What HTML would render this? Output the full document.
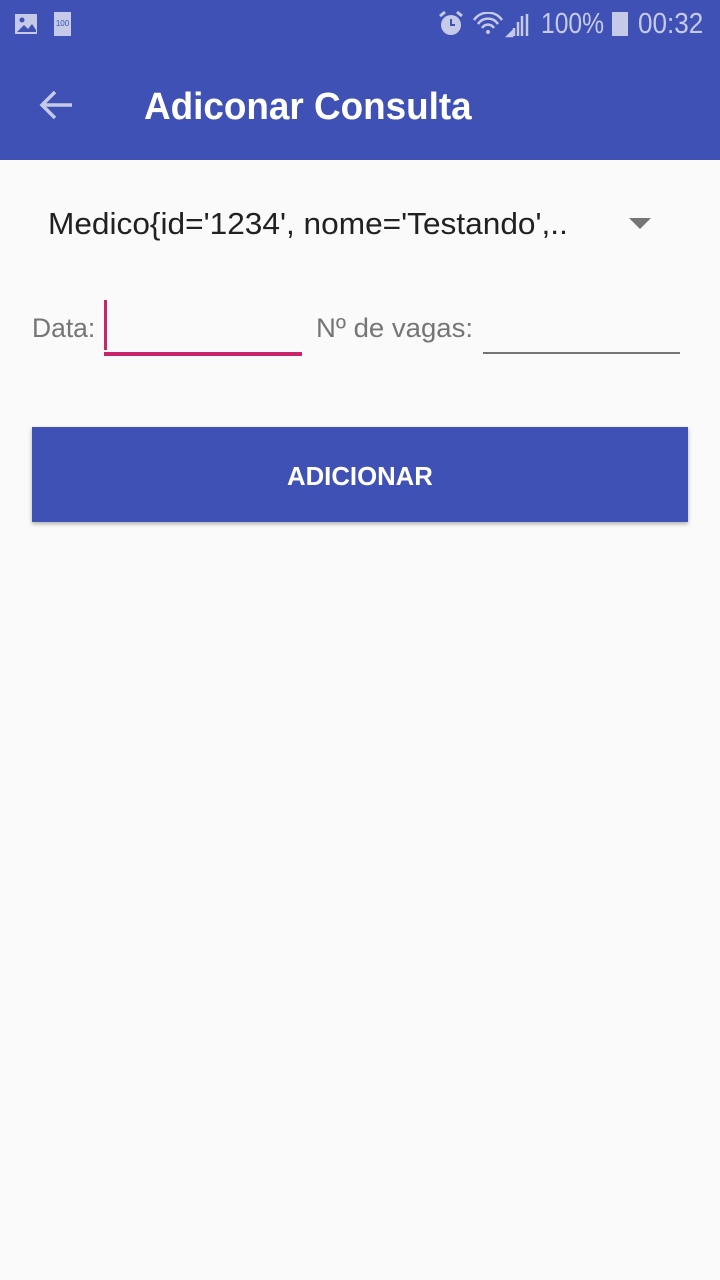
<!DOCTYPE html>
<html><head><meta charset="utf-8"><style>
body{margin:0;width:720px;height:1280px;background:#fafafa;font-family:"Liberation Sans",sans-serif;position:relative;overflow:hidden}
.bar{position:absolute;left:0;top:0;width:720px;height:160px;background:#3f51b5}
.t{position:absolute;white-space:nowrap;transform-origin:0 0}
</style></head><body>
<div class="bar"></div>
<svg style="position:absolute;left:14px;top:12px" width="26" height="26"><rect x="1" y="2" width="22" height="20" fill="#c5cae9"/><circle cx="8" cy="8" r="2.5" fill="#3f51b5"/><path d="M3 20 L10 13 L14 17 L18 12 L22 18 L22 20Z" fill="#3f51b5"/></svg>
<div style="position:absolute;left:54px;top:12px;width:17px;height:24px;background:#c5cae9;font-size:8px;color:#3f51b5;text-align:center;line-height:24px">100</div>
<svg style="position:absolute;left:438px;top:10px" width="26" height="28"><circle cx="13" cy="15" r="10" fill="#c5cae9"/><path d="M13 9 V15 H17" stroke="#3f51b5" stroke-width="2" fill="none"/><path d="M2 6 L7 2 M24 6 L19 2" stroke="#c5cae9" stroke-width="3"/></svg>
<svg style="position:absolute;left:472px;top:12px" width="60" height="26"><path d="M2 8 A17 17 0 0 1 30 8 M6 12 A12 12 0 0 1 26 12 M10 16 A7 7 0 0 1 22 16" stroke="#c5cae9" stroke-width="2.5" fill="none"/><circle cx="16" cy="20" r="2" fill="#c5cae9"/><path d="M36 24 L40 24 L40 20Z M42 24 V16 M46 24 V10 M50 24 V4 M55 24 V2" stroke="#c5cae9" stroke-width="2.5" fill="#c5cae9"/></svg>
<div class="t" style="left:541px;top:8px;font-size:29px;color:#c5cae9;transform:scaleX(.85)">100%</div>
<div style="position:absolute;left:612px;top:12px;width:16px;height:24px;background:#c5cae9"></div>
<div class="t" style="left:638px;top:8px;font-size:29px;color:#c5cae9;transform:scaleX(.9)">00:32</div>
<svg style="position:absolute;left:38px;top:88px" width="36" height="34"><path d="M34 17 H4 M17 4 L4 17 L17 30" stroke="#c5cae9" stroke-width="3.5" fill="none"/></svg>
<div class="t" style="left:144px;top:86px;font-size:38px;color:#fff;font-weight:bold;transform:scaleX(.97)">Adiconar Consulta</div>
<div class="t" style="left:48px;top:206px;font-size:31px;color:#212121;transform:scaleX(1.02)">Medico{id='1234', nome='Testando',..</div>
<svg style="position:absolute;left:629px;top:218px" width="22" height="12"><path d="M0 0 H22 L11 11Z" fill="#757575"/></svg>
<div class="t" style="left:32px;top:313px;font-size:27px;color:#757575;transform:scaleX(.98)">Data:</div>
<div style="position:absolute;left:104px;top:300px;width:3px;height:50px;background:#c8256b"></div>
<div style="position:absolute;left:104px;top:352px;width:198px;height:4px;background:#c8256b"></div>
<div class="t" style="left:316px;top:313px;font-size:27px;color:#757575;transform:scaleX(1.02)">Nº de vagas:</div>
<div style="position:absolute;left:483px;top:352px;width:197px;height:2px;background:#757575"></div>
<div style="position:absolute;left:32px;top:427px;width:656px;height:95px;background:#3f51b5;box-shadow:0 2px 4px rgba(0,0,0,.3)"></div>
<div class="t" style="left:287px;top:461px;font-size:26px;color:#fff;font-weight:bold;transform:scaleX(.99)">ADICIONAR</div>
</body></html>
